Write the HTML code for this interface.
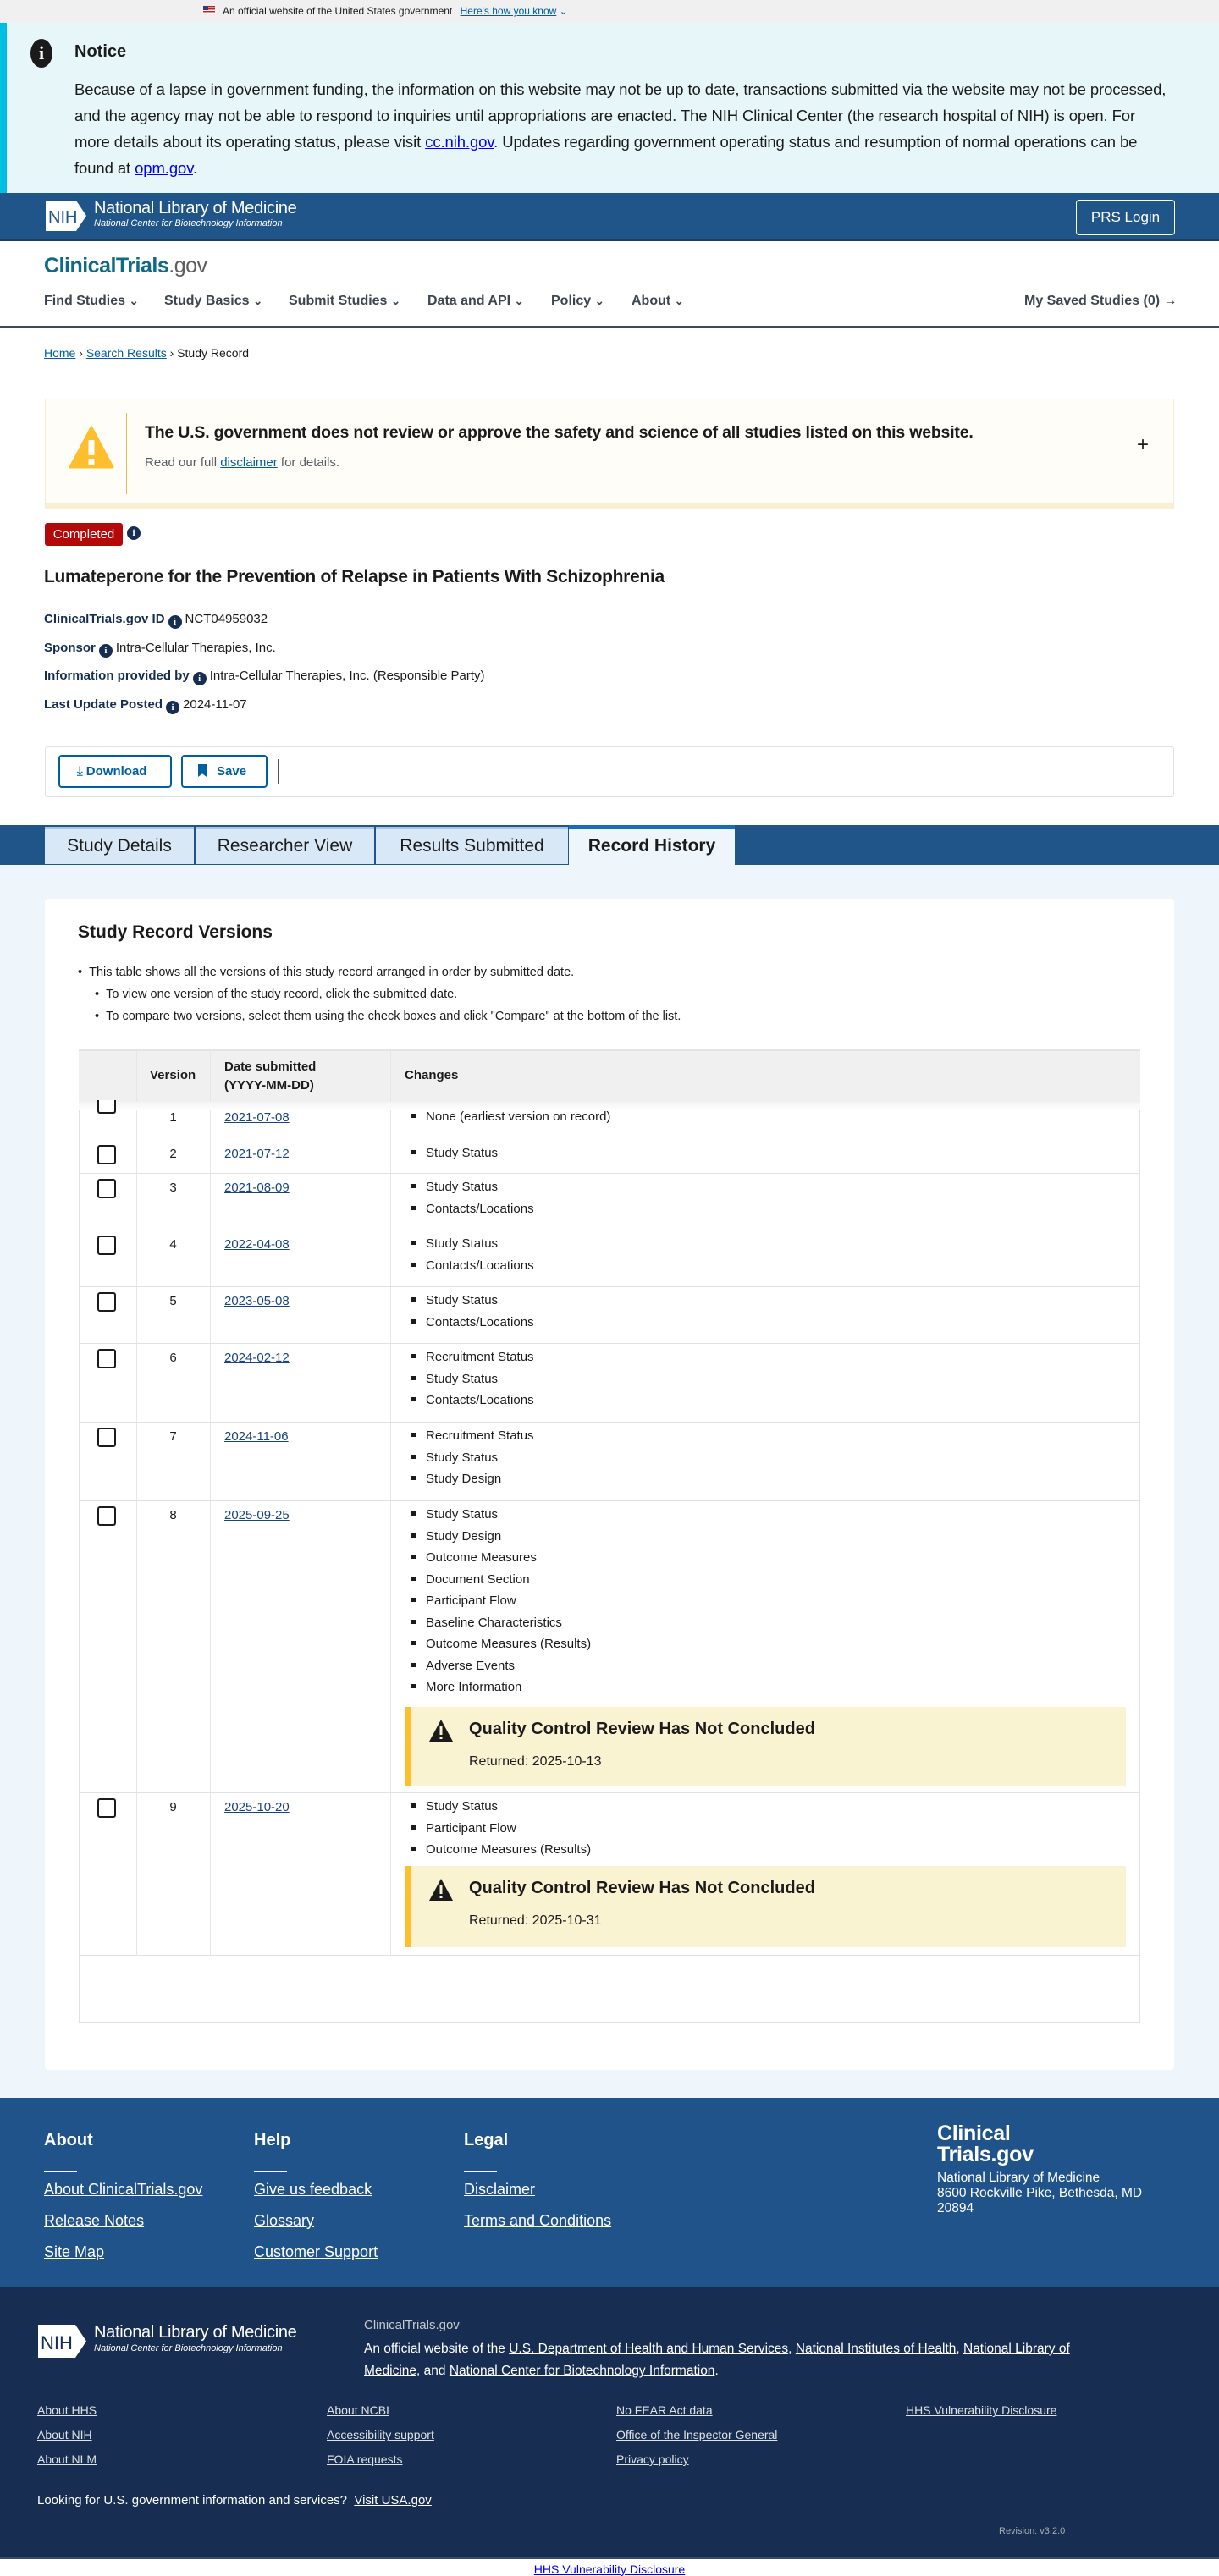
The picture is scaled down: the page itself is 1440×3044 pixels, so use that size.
<!DOCTYPE html>
<html><head><meta charset="utf-8">
<style>
*{box-sizing:border-box;margin:0;padding:0}
body{width:1440px;height:3040px;position:relative;font-family:"Liberation Sans",Arial,sans-serif;color:#1b1b1b;background:#fff;overflow:hidden}
.a{position:absolute}
a{color:#005ea2;text-decoration:underline}
.lbl{color:#162e51;font-weight:bold;font-size:15px}
.info{display:inline-block;width:16px;height:16px;border-radius:50%;background:#162e51;color:#fff;font-size:11px;font-weight:bold;text-align:center;line-height:16px;vertical-align:-2px;margin:0 4px;font-family:"Liberation Serif",serif}
.cb{position:absolute;left:115px;width:22px;height:23px;border:2px solid #1b1b1b;border-radius:3px;background:#fff}
.ver{position:absolute;left:161px;width:87px;text-align:center;font-size:15px}
.dt{position:absolute;left:265px;font-size:15px}
.dt a{color:#1a4480}
.ch{position:absolute;left:478px;font-size:15px;line-height:25.5px}
.ch div:before{content:"";display:inline-block;width:5px;height:5px;background:#1b1b1b;margin:0 12px 3px 8px}
.rl{position:absolute;left:93px;width:1254px;height:1px;background:#dfe1e2}
.qc{position:absolute;left:478px;width:852px;background:#faf3d1;border-left:8px solid #ffbe2e}
.qc b{position:absolute;left:68px;top:15px;font-size:20px}
.qc span{position:absolute;left:68px;top:56px;font-size:16px}
.qc svg{position:absolute;left:20px;top:14px}
.fl a{color:#fff;font-size:18px;display:block;position:absolute}
.fd a{color:#dfe1e2;font-size:14px;position:absolute}
</style></head><body>

<div class="a" style="left:0;top:0;width:1440px;height:27px;background:#f0f0f0"></div>
<div class="a" style="left:240px;top:7px;width:14px;height:10px;background:repeating-linear-gradient(#b22 0 1.5px,#fff 1.5px 3px)"><div style="width:6px;height:5px;background:#3c3b6e"></div></div>
<div class="a" style="left:263px;top:6px;font-size:12px">An official website of the United States government <a style="margin-left:6px;font-size:12px">Here's how you know</a> <span style="color:#005ea2">⌄</span></div>

<div class="a" style="left:0;top:27px;width:1440px;height:201px;background:#e7f6f8;border-left:8px solid #00bde3"></div>
<div class="a" style="left:36px;top:46px;width:26px;height:34px;border-radius:50%;background:#1b1b1b;color:#fff;font-family:'Liberation Serif',serif;font-weight:bold;font-size:22px;text-align:center;line-height:34px">i</div>
<div class="a" style="left:88px;top:50px;font-size:20px;font-weight:bold">Notice</div>
<div class="a" style="left:88px;top:90px;width:1290px;font-size:18.5px;line-height:31px;letter-spacing:-0.1px">Because of a lapse in government funding, the information on this website may not be up to date, transactions submitted via the website may not be processed, and the agency may not be able to respond to inquiries until appropriations are enacted. The NIH Clinical Center (the research hospital of NIH) is open. For more details about its operating status, please visit <a style="color:#0000ee">cc.nih.gov</a>. Updates regarding government operating status and resumption of normal operations can be found at <a style="color:#0000ee">opm.gov</a>.</div>

<div class="a" style="left:0;top:228px;width:1440px;height:57px;background:#20558a;border-bottom:2px solid #1a3f66"></div>
<svg class="a" style="left:52px;top:235px" width="52" height="40" viewBox="0 0 52 40"><path d="M2 2H38L50 20L38 38H2Z" fill="#fff"/><path d="M40 2L52 20L40 38" fill="none" stroke="#20558a" stroke-width="1.5"/><text x="5" y="28" font-family="Liberation Sans" font-size="20" fill="#20558a">NIH</text></svg>
<div class="a" style="left:111px;top:235px;color:#fff;font-size:20px;letter-spacing:-0.3px">National Library of Medicine</div>
<div class="a" style="left:111px;top:258px;color:#fff;font-size:11px;font-style:italic">National Center for Biotechnology Information</div>
<div class="a" style="left:1271px;top:236px;width:117px;height:42px;border:1.5px solid #fff;border-radius:4px;color:#fff;font-size:17px;text-align:center;line-height:39px">PRS Login</div>

<div class="a" style="left:52px;top:300px;font-size:25px;font-weight:bold;letter-spacing:-0.5px"><span style="color:#0f6a86">ClinicalTrials</span><span style="color:#5c5c5c;font-weight:normal">.gov</span></div>
<div class="a" style="left:52px;top:347px;font-size:16px;font-weight:bold;color:#3d4551">
<span style="position:absolute;left:0;white-space:nowrap">Find Studies <small>⌄</small></span>
<span style="position:absolute;left:142px;white-space:nowrap">Study Basics <small>⌄</small></span>
<span style="position:absolute;left:289px;white-space:nowrap">Submit Studies <small>⌄</small></span>
<span style="position:absolute;left:453px;white-space:nowrap">Data and API <small>⌄</small></span>
<span style="position:absolute;left:599px;white-space:nowrap">Policy <small>⌄</small></span>
<span style="position:absolute;left:694px;white-space:nowrap">About <small>⌄</small></span>
</div>
<div class="a" style="left:1210px;top:347px;font-size:16px;font-weight:bold;color:#3d4551;white-space:nowrap">My Saved Studies (0) →</div>
<div class="a" style="left:0;top:385px;width:1440px;height:2px;background:#3d4a5c"></div>

<div class="a" style="left:52px;top:409px;font-size:14px"><a>Home</a> › <a>Search Results</a> › Study Record</div>

<div class="a" style="left:53px;top:471px;width:1334px;height:130px;border:1px solid #f5efd2;border-bottom:7px solid #f8f0d0;background:#fffdf7"></div>
<svg class="a" style="left:81px;top:502px" width="54" height="54" viewBox="0 0 54 54"><path d="M27 3L52 50H2Z" fill="#ffbe2e" stroke="#ffbe2e" stroke-width="3" stroke-linejoin="round"/><rect x="23.5" y="18" width="7" height="18" fill="#fff"/><rect x="23.5" y="40" width="7" height="7" fill="#fff"/></svg>
<div class="a" style="left:149px;top:488px;width:1px;height:96px;background:#e5b94a"></div>
<div class="a" style="left:171px;top:500px;font-size:19.5px;font-weight:bold;letter-spacing:-0.2px">The U.S. government does not review or approve the safety and science of all studies listed on this website.</div>
<div class="a" style="left:171px;top:538px;font-size:15px;color:#565c65">Read our full <a>disclaimer</a> for details.</div>
<div class="a" style="left:1343px;top:512px;font-size:24px">+</div>

<div class="a" style="left:53px;top:618px;width:92px;height:27px;background:#b50909;border-radius:3px;color:#fff;font-size:15px;text-align:center;line-height:27px">Completed</div>
<span class="info a" style="left:150px;top:622px;margin:0">i</span>

<div class="a" style="left:52px;top:670px;font-size:21px;font-weight:bold;letter-spacing:-0.3px;color:#1b1b1b">Lumateperone for the Prevention of Relapse in Patients With Schizophrenia</div>
<div class="a" style="left:52px;top:723px;font-size:15px"><span class="lbl">ClinicalTrials.gov ID</span><span class="info">i</span>NCT04959032</div>
<div class="a" style="left:52px;top:757px;font-size:15px"><span class="lbl">Sponsor</span><span class="info">i</span>Intra-Cellular Therapies, Inc.</div>
<div class="a" style="left:52px;top:790px;font-size:15px"><span class="lbl">Information provided by</span><span class="info">i</span>Intra-Cellular Therapies, Inc. (Responsible Party)</div>
<div class="a" style="left:52px;top:824px;font-size:15px"><span class="lbl">Last Update Posted</span><span class="info">i</span>2024-11-07</div>

<div class="a" style="left:53px;top:882px;width:1334px;height:60px;border:1px solid #dfe1e2;border-radius:3px"></div>
<div class="a" style="left:69px;top:892px;width:134px;height:39px;border:2px solid #005ea2;border-radius:4px;color:#005ea2;font-weight:bold;font-size:15px;line-height:35px;padding-left:20px">⤓ Download</div>
<div class="a" style="left:214px;top:892px;width:102px;height:39px;border:2px solid #005ea2;border-radius:4px;color:#005ea2;font-weight:bold;font-size:15px;line-height:35px;padding-left:18px"><span style="display:inline-block;width:10px;height:15px;background:#005ea2;vertical-align:-2px;margin-right:12px;clip-path:polygon(0 0,100% 0,100% 100%,50% 75%,0 100%)"></span>Save</div>
<div class="a" style="left:328px;top:897px;width:1px;height:30px;background:#555"></div>

<div class="a" style="left:0;top:975px;width:1440px;height:47px;background:#20558a"></div>
<div class="a" style="left:53px;top:977px;width:176px;height:44px;background:#d9e8f6;border-top:3px solid #a9c6e5;font-size:21px;text-align:center;line-height:40px">Study Details</div>
<div class="a" style="left:231px;top:977px;width:211px;height:44px;background:#d9e8f6;border-top:3px solid #a9c6e5;font-size:21px;text-align:center;line-height:40px">Researcher View</div>
<div class="a" style="left:444px;top:977px;width:227px;height:44px;background:#d9e8f6;border-top:3px solid #a9c6e5;font-size:21px;text-align:center;line-height:40px">Results Submitted</div>
<div class="a" style="left:672px;top:975px;width:196px;height:47px;background:#eff6fb;border-top:5px solid #1a6bb5;font-size:21px;font-weight:bold;text-align:center;line-height:40px">Record History</div>

<div class="a" style="left:0;top:1022px;width:1440px;height:1457px;background:#eef5fb"></div>
<div class="a" style="left:53px;top:1062px;width:1334px;height:1384px;background:#fff;border-radius:4px"></div>
<div class="a" style="left:92px;top:1090px;font-size:21px;font-weight:bold">Study Record Versions</div>
<div class="a" style="left:92px;top:1136px;font-size:14.5px;line-height:26px">
<div>• &nbsp;This table shows all the versions of this study record arranged in order by submitted date.</div>
<div style="padding-left:20px">• &nbsp;To view one version of the study record, click the submitted date.</div>
<div style="padding-left:20px">• &nbsp;To compare two versions, select them using the check boxes and click "Compare" at the bottom of the list.</div>
</div>

<div class="a" style="left:93px;top:1240px;width:1254px;height:1150px;border:1px solid #dfe1e2"></div>
<div class="a" style="left:93px;top:1240px;width:1254px;height:62px;background:#f0f0f0;border-top:2px solid #e4e4e4"></div>
<div class="a" style="left:161px;top:1240px;width:1px;height:1070px;background:#e6e6e6"></div>
<div class="a" style="left:248px;top:1240px;width:1px;height:1070px;background:#e6e6e6"></div>
<div class="a" style="left:461px;top:1240px;width:1px;height:1070px;background:#e6e6e6"></div>
<div class="a" style="left:177px;top:1262px;font-size:15px;font-weight:bold">Version</div>
<div class="a" style="left:265px;top:1250px;font-size:15px;font-weight:bold;line-height:22px">Date submitted<br>(YYYY-MM-DD)</div>
<div class="a" style="left:478px;top:1262px;font-size:15px;font-weight:bold">Changes</div>

<div class="a" style="left:93px;top:1302px;width:1254px;height:10px;background:linear-gradient(#f4f4f4,#fff)"></div>
<div class="cb" style="top:1300px;height:16px;border-top:none;border-radius:0 0 3px 3px"></div><div class="ver" style="top:1312px">1</div><div class="dt" style="top:1312px"><a>2021-07-08</a></div><div class="ch" style="top:1307px"><div>None (earliest version on record)</div></div>
<div class="rl" style="top:1343px"></div>
<div class="cb" style="top:1353px"></div><div class="ver" style="top:1355px">2</div><div class="dt" style="top:1355px"><a>2021-07-12</a></div><div class="ch" style="top:1350px"><div>Study Status</div></div>
<div class="rl" style="top:1386px"></div>
<div class="cb" style="top:1393px"></div><div class="ver" style="top:1395px">3</div><div class="dt" style="top:1395px"><a>2021-08-09</a></div><div class="ch" style="top:1390px"><div>Study Status</div><div>Contacts/Locations</div></div>
<div class="rl" style="top:1453px"></div>
<div class="cb" style="top:1460px"></div><div class="ver" style="top:1462px">4</div><div class="dt" style="top:1462px"><a>2022-04-08</a></div><div class="ch" style="top:1457px"><div>Study Status</div><div>Contacts/Locations</div></div>
<div class="rl" style="top:1520px"></div>
<div class="cb" style="top:1527px"></div><div class="ver" style="top:1529px">5</div><div class="dt" style="top:1529px"><a>2023-05-08</a></div><div class="ch" style="top:1524px"><div>Study Status</div><div>Contacts/Locations</div></div>
<div class="rl" style="top:1587px"></div>
<div class="cb" style="top:1594px"></div><div class="ver" style="top:1596px">6</div><div class="dt" style="top:1596px"><a>2024-02-12</a></div><div class="ch" style="top:1591px"><div>Recruitment Status</div><div>Study Status</div><div>Contacts/Locations</div></div>
<div class="rl" style="top:1680px"></div>
<div class="cb" style="top:1687px"></div><div class="ver" style="top:1689px">7</div><div class="dt" style="top:1689px"><a>2024-11-06</a></div><div class="ch" style="top:1684px"><div>Recruitment Status</div><div>Study Status</div><div>Study Design</div></div>
<div class="rl" style="top:1773px"></div>
<div class="cb" style="top:1780px"></div><div class="ver" style="top:1782px">8</div><div class="dt" style="top:1782px"><a>2025-09-25</a></div><div class="ch" style="top:1777px"><div>Study Status</div><div>Study Design</div><div>Outcome Measures</div><div>Document Section</div><div>Participant Flow</div><div>Baseline Characteristics</div><div>Outcome Measures (Results)</div><div>Adverse Events</div><div>More Information</div></div>
<div class="qc" style="top:2017px;height:93px"><svg width="30" height="28" viewBox="0 0 30 28"><path d="M15 1L29 27H1Z" fill="#1b1b1b"/><rect x="13.5" y="9" width="3" height="10" fill="#faf3d1"/><rect x="13.5" y="21" width="3" height="3" fill="#faf3d1"/></svg><b>Quality Control Review Has Not Concluded</b><span>Returned: 2025-10-13</span></div>
<div class="rl" style="top:2118px"></div>
<div class="cb" style="top:2125px"></div><div class="ver" style="top:2127px">9</div><div class="dt" style="top:2127px"><a>2025-10-20</a></div><div class="ch" style="top:2122px"><div>Study Status</div><div>Participant Flow</div><div>Outcome Measures (Results)</div></div>
<div class="qc" style="top:2205px;height:96px"><svg width="30" height="28" viewBox="0 0 30 28"><path d="M15 1L29 27H1Z" fill="#1b1b1b"/><rect x="13.5" y="9" width="3" height="10" fill="#faf3d1"/><rect x="13.5" y="21" width="3" height="3" fill="#faf3d1"/></svg><b>Quality Control Review Has Not Concluded</b><span>Returned: 2025-10-31</span></div>
<div class="rl" style="top:2310px"></div>

<div class="a" style="left:0;top:2479px;width:1440px;height:224px;background:#205389"></div>
<div class="a" style="left:52px;top:2518px;color:#fff;font-size:20px;font-weight:bold">About</div>
<div class="a" style="left:300px;top:2518px;color:#fff;font-size:20px;font-weight:bold">Help</div>
<div class="a" style="left:548px;top:2518px;color:#fff;font-size:20px;font-weight:bold">Legal</div>
<div class="a" style="left:52px;top:2566px;width:39px;height:1px;background:#fff"></div>
<div class="a" style="left:300px;top:2566px;width:39px;height:1px;background:#fff"></div>
<div class="a" style="left:548px;top:2566px;width:39px;height:1px;background:#fff"></div>
<div class="fl">
<a style="left:52px;top:2577px">About ClinicalTrials.gov</a><a style="left:52px;top:2614px">Release Notes</a><a style="left:52px;top:2651px">Site Map</a>
<a style="left:300px;top:2577px">Give us feedback</a><a style="left:300px;top:2614px">Glossary</a><a style="left:300px;top:2651px">Customer Support</a>
<a style="left:548px;top:2577px">Disclaimer</a><a style="left:548px;top:2614px">Terms and Conditions</a>
</div>
<div class="a" style="left:1107px;top:2509px;color:#fff;font-size:25px;font-weight:bold;line-height:25px;letter-spacing:-0.3px">Clinical<br>Trials.gov</div>
<div class="a" style="left:1107px;top:2565px;color:#fff;font-size:15.5px;line-height:18px">National Library of Medicine<br>8600 Rockville Pike, Bethesda, MD<br>20894</div>

<div class="a" style="left:0;top:2703px;width:1440px;height:321px;background:#172d51;border-top:2px solid #15304f;border-bottom:2px solid #3a4a63"></div>
<svg class="a" style="left:43px;top:2745px" width="62" height="43" viewBox="0 0 62 43"><path d="M2 2H46L59 21.5L46 41H2Z" fill="#fff"/><path d="M48 2L61 21.5L48 41" fill="none" stroke="#172d51" stroke-width="1.5"/><text x="5" y="31" font-family="Liberation Sans" font-size="22" fill="#172d51">NIH</text></svg>
<div class="a" style="left:111px;top:2745px;color:#fff;font-size:20px;letter-spacing:-0.3px">National Library of Medicine</div>
<div class="a" style="left:111px;top:2769px;color:#fff;font-size:11px;font-style:italic">National Center for Biotechnology Information</div>
<div class="a" style="left:430px;top:2739px;color:#c6cace;font-size:15px">ClinicalTrials.gov</div>
<div class="a" style="left:430px;top:2763px;width:900px;color:#fff;font-size:15.5px;line-height:26px">An official website of the <a style="color:#fff">U.S. Department of Health and Human Services</a>, <a style="color:#fff">National Institutes of Health</a>, <a style="color:#fff">National Library of Medicine</a>, and <a style="color:#fff">National Center for Biotechnology Information</a>.</div>
<div class="fd">
<a style="left:44px;top:2840px">About HHS</a><a style="left:44px;top:2869px">About NIH</a><a style="left:44px;top:2898px">About NLM</a>
<a style="left:386px;top:2840px">About NCBI</a><a style="left:386px;top:2869px">Accessibility support</a><a style="left:386px;top:2898px">FOIA requests</a>
<a style="left:728px;top:2840px">No FEAR Act data</a><a style="left:728px;top:2869px">Office of the Inspector General</a><a style="left:728px;top:2898px">Privacy policy</a>
<a style="left:1070px;top:2840px">HHS Vulnerability Disclosure</a>
</div>
<div class="a" style="left:44px;top:2946px;color:#fff;font-size:15px">Looking for U.S. government information and services? &nbsp;<a style="color:#fff">Visit USA.gov</a></div>
<div class="a" style="left:1180px;top:2985px;color:#a9aeb1;font-size:11px">Revision: v3.2.0</div>
<div class="a" style="left:0;top:3028px;width:1440px;text-align:center;font-size:14px"><a style="color:#0000ee">HHS Vulnerability Disclosure</a></div>
</body></html>
